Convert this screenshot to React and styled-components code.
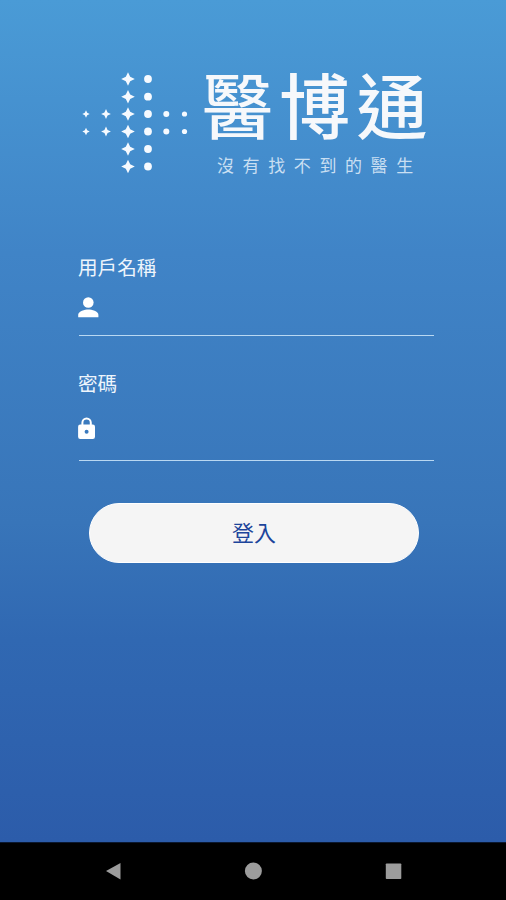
import styled, { createGlobalStyle } from "styled-components";

const GlobalStyle = createGlobalStyle`
    * {
        box-sizing: border-box;
    }

    body {
        margin: 0;
        font-family: "Noto Sans CJK TC", "Noto Sans", sans-serif;
    }
`;

const Screen = styled.div`
    display: flex;
    flex-direction: column;
    width: 506px;
    height: 900px;
    overflow: hidden;
    background: #000;
`;

const Main = styled.main`
    flex: 1;
    padding: 68px 72px 0 78px;
    background: linear-gradient(180deg, #4a9bd6 0%, #4084c7 30%, #3875b9 62%, #3068b2 76%, #2c5caa 100%);
`;

const Brand = styled.header`
    display: flex;
    height: 184px;
`;

const BrandText = styled.div`
    margin-left: 12px;
    color: #f6f8fb;
    white-space: nowrap;
`;

const BrandName = styled.h1`
    margin: -5px 0 0;
    font-size: 71px;
    font-weight: 500;
    line-height: 79px;
    letter-spacing: 6.3px;
`;

const Tagline = styled.p`
    margin: 12px 0 0 15px;
    font-size: 17px;
    font-weight: 400;
    line-height: 22px;
    letter-spacing: 8.6px;
    color: #c9dff2;
`;

const Field = styled.label`
    display: block;
    height: ${({ $height }) => $height}px;
`;

const FieldLabel = styled.span`
    display: block;
    font-size: 19.6px;
    line-height: 30px;
    color: #eef5fc;
`;

const InputRow = styled.span`
    display: flex;
    align-items: flex-start;
    height: ${({ $height }) => $height}px;
    margin-left: 1px;
    width: 355px;
    padding-top: ${({ $top }) => $top}px;
    border-bottom: 1px solid #b9d8f2;

    svg {
        flex: none;
        margin-left: -1px;
    }
`;

const Input = styled.input`
    flex: 1;
    min-width: 0;
    height: 24px;
    border: 0;
    outline: 0;
    background: transparent;
    color: #fff;
    font: inherit;
`;

const LoginButton = styled.button`
    display: block;
    width: 330px;
    height: 60px;
    margin: 0 0 0 11px;
    padding: 0 0 4px;
    border: 1px solid #fff;
    border-radius: 30px;
    background: #f5f5f5;
    color: #1d459b;
    font-family: inherit;
    font-size: 22px;
`;

const NavBar = styled.nav`
    display: flex;
    justify-content: space-between;
    align-items: center;
    height: 58px;
    padding: 0 104px 2px;
    border-top: 1px solid #0b1830;
    background: #000;

    svg {
        display: block;
        fill: #9c9c9c;
    }
`;

const rows = [11, 28.7, 46, 63.5, 81, 98.5];

// four-pointed star with concave sides
const star = (x, y, r) => {
    const k = r * 0.32;
    return `M${x} ${y - r}L${x + k} ${y - k}L${x + r} ${y}L${x + k} ${y + k}L${x} ${y + r}L${x - k} ${y + k}L${x - r} ${y}L${x - k} ${y - k}Z`;
};

const LogoMark = () => (
    <svg width="112" height="110" viewBox="0 0 112 110" fill="#f6faff">
        {rows.map((y) => (
            <g key={y}>
                <path d={star(50, y, 6.8)} />
                <circle cx="70" cy={y} r="3.9" />
            </g>
        ))}
        {[46, 63.5].map((y) => (
            <g key={y}>
                <path d={star(8, y, 3.7)} />
                <path d={star(28, y, 4.9)} />
                <circle cx="88.3" cy={y} r="3" />
                <circle cx="106.5" cy={y} r="2.6" />
            </g>
        ))}
    </svg>
);

const PersonIcon = () => (
    <svg width="21" height="21" viewBox="0 0 21 21" fill="#fff">
        <circle cx="10.3" cy="5.5" r="5.3" />
        <path d="M0.2 20.3v-2.6c0-3.4 6.7-5.2 10.1-5.2s10.1 1.8 10.1 5.2v2.6z" />
    </svg>
);

const LockIcon = () => (
    <svg width="18" height="23" viewBox="0.5 0 18 23" fill="#fff">
        <path
            fillRule="evenodd"
            d="M15.3 7.6h-1V5.7a5.2 5.2 0 0 0-10.4 0v1.9h-1A2.2 2.2 0 0 0 .6 9.8v10a2.2 2.2 0 0 0 2.3 2.2h12.4a2.2 2.2 0 0 0 2.2-2.2v-10a2.2 2.2 0 0 0-2.2-2.2zM5.9 7.6V5.7a3.2 3.2 0 0 1 6.4 0v1.9zM9.1 12.8a2 2 0 1 1 0 4 2 2 0 0 1 0-4z"
        />
    </svg>
);

export default function App() {
    return (
        <>
            <GlobalStyle />
            <Screen>
                <Main>
                    <Brand>
                        <LogoMark />
                        <BrandText>
                            <BrandName>醫博通</BrandName>
                            <Tagline>沒有找不到的醫生</Tagline>
                        </BrandText>
                    </Brand>
                    <Field $height={116}>
                        <FieldLabel>用戶名稱</FieldLabel>
                        <InputRow $height={54} $top={15}>
                            <PersonIcon />
                            <Input type="text" />
                        </InputRow>
                    </Field>
                    <Field $height={135}>
                        <FieldLabel>密碼</FieldLabel>
                        <InputRow $height={63} $top={19}>
                            <LockIcon />
                            <Input type="password" />
                        </InputRow>
                    </Field>
                    <LoginButton type="button">登入</LoginButton>
                </Main>
                <NavBar>
                    <svg width="18" height="18" viewBox="0 0 18 18">
                        <path d="M2 9L16.5 1v16.5z" />
                    </svg>
                    <svg width="18" height="18" viewBox="0 0 18 18">
                        <circle cx="9.4" cy="9" r="8.5" />
                    </svg>
                    <svg width="18" height="18" viewBox="0 0 18 18">
                        <rect x="1.8" y="1.5" width="15.5" height="15.5" rx="0.8" />
                    </svg>
                </NavBar>
            </Screen>
        </>
    );
}
